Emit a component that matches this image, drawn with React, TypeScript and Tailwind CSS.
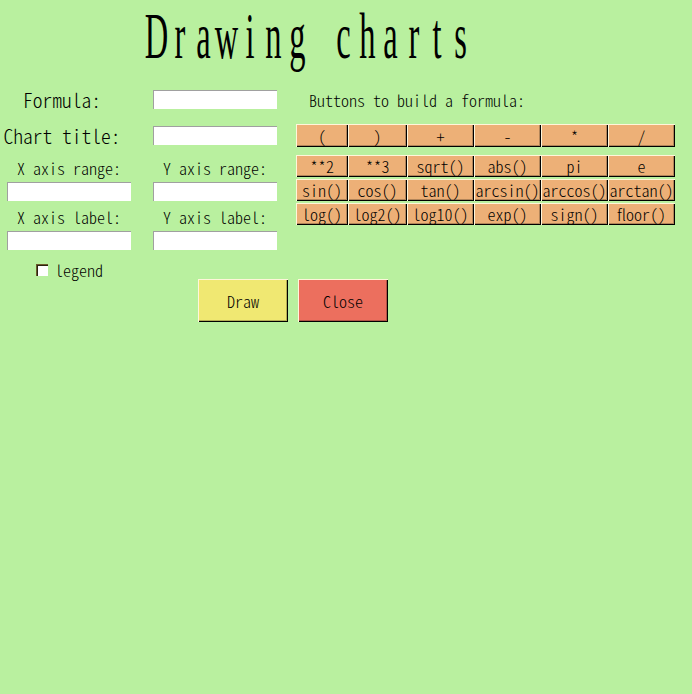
import React from 'react';

const OPS = ['(', ')', '+', '-', '*', '/'];
const FUNCS = [
  ['**2', '**3', 'sqrt()', 'abs()', 'pi', 'e'],
  ['sin()', 'cos()', 'tan()', 'arcsin()', 'arccos()', 'arctan()'],
  ['log()', 'log2()', 'log10()', 'exp()', 'sign()', 'floor()'],
];
const COL_W = ['w-[52px]', 'w-[59px]', 'w-[67px]', 'w-[67px]', 'w-[67px]', 'w-[67px]'];

const gothic = "font-['Noto_Sans_CJK_JP',sans-serif] font-light [font-feature-settings:'hwid']";
const raised = 'shadow-[inset_1px_1px_0_#fff6da,inset_-1px_-1px_0_#000,inset_-2px_-2px_0_#00000040]';

function Field() {
  return <div className="w-[124px] h-[19px] bg-white shadow-[inset_1px_1px_0_#a0a0a0]" />;
}

function OpButton({ label, col, h }: { label: string; col: number; h: string }) {
  return (
    <button className={`${COL_W[col]} ${h} flex items-center justify-center bg-[#edb077] text-[16px] leading-none text-black ${raised}`}>
      {label}
    </button>
  );
}

// title is drawn in fixed cells so it keeps the half-width mincho look
function Title({ text }: { text: string }) {
  return (
    <div className="flex font-['Liberation_Serif',serif] font-normal text-[65px] leading-[65px] [font-feature-settings:normal] whitespace-nowrap">
      {text.split('').map((c, i) => (
        <div key={i} className="w-[23.36px] flex justify-center">
          <span className="inline-block scale-x-[0.5]">{c === ' ' ? '\u00a0' : c}</span>
        </div>
      ))}
    </div>
  );
}

export default function App() {
  return (
    <div className={`w-[692px] h-[694px] bg-[#b9f09f] text-black ${gothic}`}>
      <div className="h-[80px] pl-[145px] pt-[4px]">
        <Title text="Drawing charts" />
      </div>

      <div className="flex">
        <div className="w-[296px] flex flex-col">
          <div className="mt-[10px] h-[19px] flex items-center gap-[8px]">
            <div className="w-[138px] pr-[14px] text-center text-[19.5px] leading-none">Formula:</div>
            <div className="w-[138px] flex justify-center"><Field /></div>
          </div>
          <div className="mt-[17px] h-[19px] flex items-center gap-[8px]">
            <div className="w-[138px] pr-[14px] text-center text-[19.5px] leading-none whitespace-nowrap">Chart title:</div>
            <div className="w-[138px] flex justify-center"><Field /></div>
          </div>
          <div className="mt-[13px] h-[19px] flex items-center gap-[8px] text-[16px] leading-none">
            <div className="w-[138px] text-center">X axis range:</div>
            <div className="w-[138px] text-center">Y axis range:</div>
          </div>
          <div className="mt-[5px] h-[19px] flex items-center gap-[8px]">
            <div className="w-[138px] flex justify-center"><Field /></div>
            <div className="w-[138px] flex justify-center"><Field /></div>
          </div>
          <div className="mt-[6px] h-[19px] flex items-center gap-[8px] text-[16px] leading-none">
            <div className="w-[138px] text-center">X axis label:</div>
            <div className="w-[138px] text-center">Y axis label:</div>
          </div>
          <div className="mt-[5px] h-[19px] flex items-center gap-[8px]">
            <div className="w-[138px] flex justify-center"><Field /></div>
            <div className="w-[138px] flex justify-center"><Field /></div>
          </div>
          <div className="mt-[10px] h-[19px] pl-[36px] flex items-center gap-[7px] text-[16px] leading-none">
            <div className="w-[12px] h-[12px] bg-white shadow-[inset_1px_1px_0_#6b5a2c,inset_2px_2px_0_#2a2410]" />
            <span>legend</span>
          </div>
        </div>

        <div className="flex flex-col">
          <div className="mt-[10px] h-[19px] pl-[13px] flex items-center text-[16px] leading-none whitespace-nowrap">
            Buttons to build a formula:
          </div>
          <div className="mt-[15px] flex">
            {OPS.map((op, i) => (
              <OpButton key={op} label={op} col={i} h="h-[23px]" />
            ))}
          </div>
          <div className="mt-[8px] flex flex-col gap-[2px]">
            {FUNCS.map((row, r) => (
              <div key={r} className="flex">
                {row.map((f, i) => (
                  <OpButton key={f} label={f} col={i} h="h-[22px]" />
                ))}
              </div>
            ))}
          </div>
        </div>
      </div>

      <div className="flex gap-[10px] pl-[198px]">
        <button className={`w-[90px] h-[43px] flex items-center justify-center bg-[#f0e872] text-[16px] leading-none ${raised}`}>
          Draw
        </button>
        <button className={`w-[90px] h-[43px] flex items-center justify-center bg-[#ec6f5e] text-[16px] leading-none ${raised}`}>
          Close
        </button>
      </div>
    </div>
  );
}
